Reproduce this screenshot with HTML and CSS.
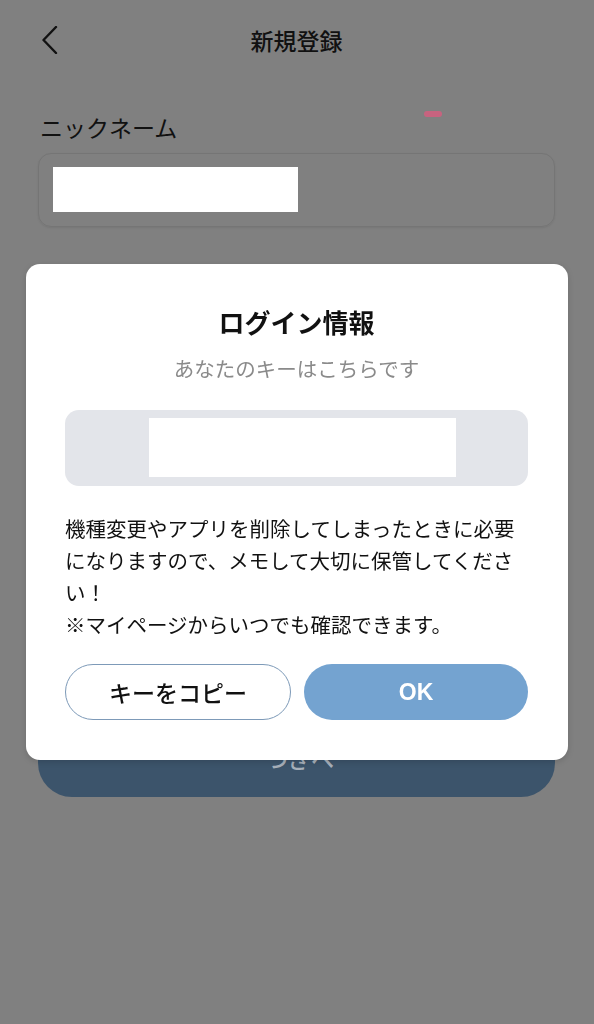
FILE: index.html
```html
<!DOCTYPE html>
<html lang="ja">
<head>
<meta charset="utf-8">
<title>新規登録</title>
<link rel="stylesheet" href="styles.css">
</head>
<body>
<div class="page">
  <header class="header">
    <div class="back">
      <svg width="16" height="28" viewBox="0 0 16 28"><path d="M14 1 L1.5 14 L14 27" fill="none" stroke="#111" stroke-width="2.4" stroke-linecap="round" stroke-linejoin="round"/></svg>
    </div>
    <h1 class="title">新規登録</h1>
    <div></div>
  </header>
  <div class="label-row">
    <span class="label">ニックネーム</span>
    <span class="dash"></span>
  </div>
  <div class="input">
    <div class="redact-input"></div>
  </div>
  <div class="next-btn">つぎへ</div>
</div>

<div class="overlay">
  <div class="dialog">
    <h2 class="d-title">ログイン情報</h2>
    <p class="d-sub">あなたのキーはこちらです</p>
    <div class="keybox"><div class="redact-key"></div></div>
    <p class="d-body">機種変更やアプリを削除してしまったときに必要になりますので、メモして大切に保管してください！<br>※マイページからいつでも確認できます。</p>
    <div class="actions">
      <button class="btn btn-copy">キーをコピー</button>
      <button class="btn btn-ok">OK</button>
    </div>
  </div>
</div>
</body>
</html>
```

FILE: styles.css
```css
* { box-sizing: border-box; }
html, body { margin: 0; padding: 0; }
body {
  background: #808080;
  font-family: "Noto Sans CJK JP", "Noto Sans", sans-serif;
  color: #111;
  width: 594px;
  height: 1024px;
  overflow: hidden;
}
.page { padding: 0 39px 0 38px; }
.header {
  height: 80px;
  display: grid;
  grid-template-columns: 1fr auto 1fr;
  align-items: center;
}
.back { display: flex; align-items: center; padding-left: 4px; }
.back svg { display: block; }
.title {
  margin: 0;
  font-size: 23px;
  font-weight: 500;
  line-height: 32px;
  color: #111;
}
.label-row {
  margin-top: 31px;
  display: flex;
  align-items: flex-start;
}
.label {
  font-size: 23px;
  line-height: 32px;
  padding-left: 2px;
  color: #111;
}
.dash {
  width: 18px;
  height: 6px;
  border-radius: 3px;
  background: #c7637f;
  margin-left: 247px;
}
.input {
  margin-top: 10px;
  height: 74px;
  border: 1.5px solid #757575;
  border-radius: 13px;
  padding: 13px 0 0 14px;
  box-shadow: 0 1px 2px rgba(0,0,0,0.08);
}
.redact-input { width: 245px; height: 45px; background: #fff; }
.next-btn {
  margin-top: 498px;
  height: 72px;
  border-radius: 34px;
  background: #3c546b;
  color: #a7b0ba;
  font-size: 23px;
  display: flex;
  align-items: center;
  justify-content: center;
  padding: 0 0 7px 6px;
  font-weight: 500;
}

.overlay {
  position: fixed;
  inset: 0;
  display: flex;
  align-items: center;
  justify-content: center;
}
.dialog {
  width: 542px;
  background: #fff;
  border-radius: 14px;
  padding: 40px 40px 40px 39px;
  display: flex;
  flex-direction: column;
  box-shadow: 0 2px 6px rgba(0,0,0,0.15);
}
.d-title {
  margin: 0;
  text-align: center;
  font-size: 26px;
  font-weight: 700;
  line-height: 35px;
  color: #111;
}
.d-sub {
  margin: 15px 0 0;
  text-align: center;
  font-size: 20.5px;
  line-height: 29px;
  color: #8a8a8a;
}
.keybox {
  margin-top: 27px;
  height: 76px;
  background: #e3e5ea;
  border-radius: 14px;
  padding: 8px 72px 9px 84px;
}
.redact-key { height: 100%; background: #fff; }
.d-body {
  margin: 26px 0 0;
  font-size: 20.5px;
  line-height: 32px;
  color: #111;
}
.actions {
  margin-top: 24px;
  display: flex;
  gap: 13px;
}
.btn {
  flex: 1;
  height: 56px;
  border-radius: 28px;
  font-family: "Noto Sans CJK JP", "Noto Sans", sans-serif;
  font-size: 23px;
  display: flex;
  align-items: center;
  justify-content: center;
  padding: 0;
}
.btn-copy {
  background: #fff;
  border: 1.5px solid #7d9ab8;
  color: #111;
  font-weight: 500;
}
.btn-ok {
  background: #74a3d0;
  border: none;
  color: #fff;
  font-weight: 700;
  font-family: "Liberation Sans", "Noto Sans", sans-serif;
  font-size: 23px;
}
```
